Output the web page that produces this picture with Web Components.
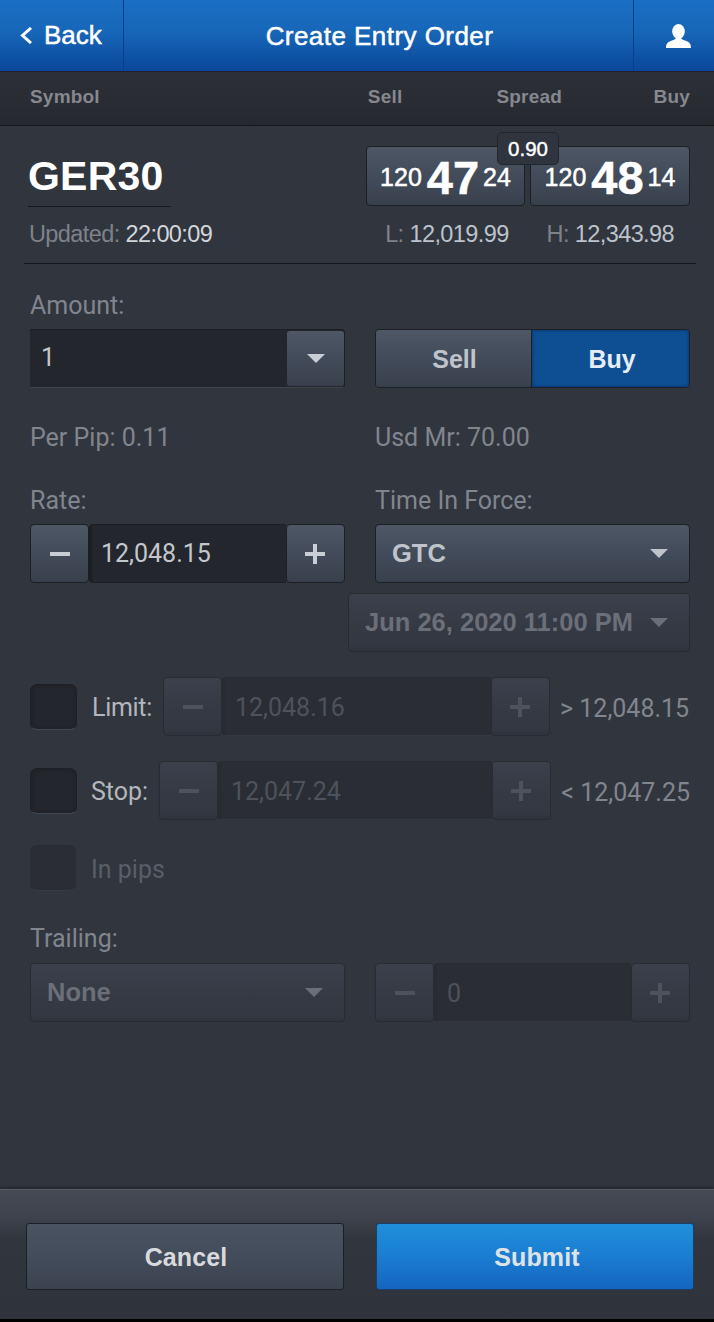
<!DOCTYPE html>
<html>
<head>
<meta charset="utf-8">
<title>Create Entry Order</title>
<style>
html,body{margin:0;padding:0;background:#000}
body{width:714px;height:1322px;overflow:hidden;font-family:"Roboto",sans-serif}
</style>
</head>
<body>
<order-screen>
  <app-bar slot="top">Create Entry Order</app-bar>
  <column-bar slot="top"></column-bar>
  <quote-panel slot="top"></quote-panel>

  <form-row cols style="--gap:28px"><field-label>Amount:</field-label></form-row>
  <form-row cols style="--gap:11px">
    <combo-box>1</combo-box>
    <side-toggle></side-toggle>
  </form-row>
  <form-row cols style="--gap:36px">
    <field-label>Per Pip: 0.11</field-label>
    <field-label>Usd Mr: 70.00</field-label>
  </form-row>
  <form-row cols style="--gap:37px">
    <field-label>Rate:</field-label>
    <field-label>Time In Force:</field-label>
  </form-row>
  <form-row cols style="--gap:11px">
    <num-stepper>12,048.15</num-stepper>
    <drop-select>GTC</drop-select>
  </form-row>
  <form-row cols style="--gap:10px">
    <span></span>
    <drop-select dim style="margin-left:-27px">Jun 26, 2020 11:00 PM</drop-select>
  </form-row>
  <form-row style="--gap:25px">
    <check-box></check-box>
    <field-label bright style="margin:3px -4px 0 15px;width:60px;letter-spacing:-.3px">Limit:</field-label>
    <num-stepper dim style="flex:1;margin-left:15px">12,048.16</num-stepper>
    <field-label style="margin:4px 1px 0 10px;width:129px;text-align:right;white-space:nowrap">&gt; 12,048.15</field-label>
  </form-row>
  <form-row style="--gap:25px">
    <check-box></check-box>
    <field-label bright style="margin:3px -4px 0 14px;width:57px">Stop:</field-label>
    <num-stepper dim style="flex:1;margin-left:15px">12,047.24</num-stepper>
    <field-label style="margin:4px 0 0 10px;width:129px;text-align:right;white-space:nowrap">&lt; 12,047.25</field-label>
  </form-row>
  <form-row style="--gap:25px">
    <check-box dim></check-box>
    <field-label faint style="margin:3px 0 0 15px">In pips</field-label>
  </form-row>
  <form-row cols style="--gap:34px"><field-label>Trailing:</field-label></form-row>
  <form-row cols style="--gap:12px">
    <drop-select dim>None</drop-select>
    <num-stepper dim>0</num-stepper>
  </form-row>

  <action-bar slot="bottom">
    <action-button>Cancel</action-button>
    <action-button primary>Submit</action-button>
  </action-bar>
</order-screen>

<script>
// small helper, every element is just a style + markup in an open shadow root
const define = (name, css, html) => customElements.define(name, class extends HTMLElement {
    constructor() {
        super().attachShadow({ mode: "open" }).innerHTML = `<style>${css}</style>${html}`
    }
})

const KEY = `background:linear-gradient(#4e5766,#434c5a 45%,#3c4452 85%,#383f4c);border:1px solid #1c1f25;border-radius:4px;box-sizing:border-box;`
const KEY_DIM = `background:linear-gradient(#3b404c,#343944 60%,#333843 88%,#2f333c);border:1px solid #282b32;border-radius:4px;box-sizing:border-box;`
const ARROW = `<svg width="18" height="9" viewBox="0 0 18 9"><path d="M0 0H18L9 9Z" fill="currentColor"/></svg>`
const MINUS = `<svg width="20" height="4" viewBox="0 0 20 4"><rect width="20" height="4" fill="currentColor"/></svg>`
const PLUS = `<svg width="20" height="20" viewBox="0 0 20 20"><path d="M8 0h4v8h8v4h-8v8H8v-8H0V8h8z" fill="currentColor"/></svg>`

define("order-screen", `
    :host{display:flex;flex-direction:column;width:714px;height:1322px;background:#31353e;color:#878b93}
    main{flex:1;padding:0 24px 0 30px;display:block}
    footer{border-bottom:3px solid #000}`,
    `<slot name="top"></slot><main><slot></slot></main><footer><slot name="bottom"></slot></footer>`)

define("app-bar", `
    :host{display:flex;height:72px;box-sizing:border-box;border-bottom:1px solid #1f2329;
        background:linear-gradient(#1a6fc4,#1766b8 45%,#0d4fa2 85%,#0b479a);color:#fff;
        font:400 26px "Liberation Sans",sans-serif;-webkit-text-stroke:.5px #fff}
    .cell{display:flex;align-items:center;box-sizing:border-box}
    .back{width:124px;border-right:1px solid #0a3f88;padding-left:20px;gap:12px}
    .title{flex:1;justify-content:center;letter-spacing:.45px;padding:1px 0 0 2px}
    .user{width:81px;border-left:1px solid #0a3f88;padding:1px 0 0 32px}`,
    `<div class="cell back">
        <svg width="12" height="17" viewBox="0 0 12 17"><path d="M11 1L2.500 8.500 11 16" fill="none" stroke="#fff" stroke-width="3"/></svg>
        <span>Back</span>
    </div>
    <div class="cell title"><slot></slot></div>
    <div class="cell user">
        <svg width="25" height="24" viewBox="0 0 25 24"><ellipse cx="12.500" cy="7.500" rx="6.300" ry="7.500" fill="#fff"/><path d="M0 24c0-5 2.500-6.500 6-7.500 2-.6 3.500-1.200 4-2.500h5c.5 1.300 2 1.900 4 2.500 3.500 1 6 2.500 6 7.500z" fill="#fff"/></svg>
    </div>`)

define("column-bar", `
    :host{display:block;height:54px;box-sizing:border-box;border-bottom:1px solid #16181c;
        background:linear-gradient(#2c2f36,#292c33 60%,#26282e);color:#85888e;
        font:700 19px "Liberation Sans",sans-serif;letter-spacing:.2px;position:relative}
    div{display:flex;padding:13px 24px 0 30px;line-height:24px}
    .sell{margin-left:268px}.spread{margin-left:94px}.buy{margin-left:auto}`,
    `<div><span>Symbol</span><span class="sell">Sell</span><span class="spread">Spread</span><span class="buy">Buy</span></div>`)

define("price-tile", `
    :host{display:flex;align-items:center;justify-content:center;height:60px;${KEY}color:#fff;
        font:400 25px "Liberation Sans",sans-serif;-webkit-text-stroke:.5px #fff;gap:5px;width:159px;padding-top:2px}
    b{font:700 47px/1 "Liberation Sans",sans-serif}
    span:last-child{margin-left:-1px}`,
    `<span><slot name="a"></slot></span><b><slot name="b"></slot></b><span><slot name="c"></slot></span>`)

define("quote-panel", `
    :host{display:block;margin:0 18px 0 24px;padding:20px 6px 16px 0;border-bottom:1px solid #15171b;
        font:400 23.500px/26px "Liberation Sans",sans-serif;letter-spacing:-.6px;color:#7d828a}
    .top{display:flex;justify-content:space-between}
    .sym{margin-left:4px;width:143px;height:61px;box-sizing:border-box;border-bottom:1px solid #17191d;letter-spacing:.2px;
        color:#fff;font:700 41px/61px "Liberation Sans",sans-serif}
    .prices{display:flex;gap:5px;position:relative;letter-spacing:0}
    .badge{position:absolute;left:131px;top:-14px;width:62px;height:33px;box-sizing:border-box;border-radius:5px;
        background:#30343f;border:1px solid #23262d;color:#fff;font:400 20.500px/31px "Liberation Sans",sans-serif;
        -webkit-text-stroke:.4px #fff;text-align:center}
    .info{display:flex;margin-top:14px;padding-left:5px}
    em{font-style:normal;color:#d2d6db}
    .lo{margin-left:auto}.hi{margin-left:38px;margin-right:16px}
    .lo em,.hi em{color:#bcc3cc}`,
    `<div class="top">
        <div class="sym">GER30</div>
        <div class="prices">
            <price-tile><span slot="a">120</span><span slot="b">47</span><span slot="c">24</span></price-tile>
            <price-tile style="width:160px"><span slot="a">120</span><span slot="b">48</span><span slot="c">14</span></price-tile>
            <div class="badge">0.90</div>
        </div>
    </div>
    <div class="info">
        <span>Updated: <em>22:00:09</em></span>
        <span class="lo">L: <em>12,019.99</em></span>
        <span class="hi">H: <em>12,343.98</em></span>
    </div>`)

define("form-row", `
    :host{display:flex;align-items:center;margin-top:var(--gap,0)}
    :host([cols]){display:grid;grid-template-columns:315px 315px;gap:30px}`,
    `<slot></slot>`)

define("field-label", `
    :host{display:block;font:400 25px/28px "Roboto",sans-serif;margin-bottom:-2px;color:#81858d}
    :host([bright]){color:#b3b7bd}
    :host([faint]){color:#5a5e68}`,
    `<slot></slot>`)

define("combo-box", `
    :host{display:flex;height:59px;box-sizing:border-box;background:#23262c;border-top:1px solid #1c1e23;border-bottom:1px solid #40444c;border-right:1px solid #1c1e23;border-radius:0 4px 4px 0;
        font:400 25px "Roboto",sans-serif;color:#c3c7cd}
    .val{flex:1;padding-left:11px;line-height:56px}
    .key{width:57px;margin:1px 0;${KEY}border:0;border-radius:3px;display:flex;align-items:center;justify-content:center;color:#c9ced6}`,
    `<div class="val"><slot></slot></div><div class="key">${ARROW}</div>`)

define("side-toggle", `
    :host{display:flex;height:59px;box-sizing:border-box;border:1px solid #1c1f25;border-radius:4px;overflow:hidden;
        font:700 25px/59px "Liberation Sans",sans-serif;text-align:center}
    .sell{width:156px;box-sizing:border-box;padding-left:2px;background:linear-gradient(#4e5766,#434c5a 45%,#3c4452 85%,#383f4c);color:#bfc4cc;border-right:1px solid #1c1f25}
    .buy{flex:1;padding-left:3px;background:#0e4f94;color:#e6edf6;box-shadow:inset 0 0 3px 1px #0a3a78}`,
    `<div class="sell">Sell</div><div class="buy">Buy</div>`)

define("num-stepper", `
    :host{display:flex;height:59px;box-sizing:border-box;font:400 25px "Roboto",sans-serif;color:#c3c7cd}
    .key{width:59px;flex:none;${KEY}display:flex;align-items:center;justify-content:center;color:#c9ced6}
    .key:last-child{padding-right:1px}
    .val{flex:1;min-width:0;background:#23262c;border:1px solid #1c1e23;border-left-width:3px;border-right:0;padding-left:9px;line-height:57px;box-sizing:border-box;border-radius:4px 0 0 4px}
    :host([dim]){color:#4e525c}
    :host([dim]) .key{${KEY_DIM}color:#4e525c}
    :host([dim]) .val{background:#2a2d33;border-color:#282b31;border-bottom-color:#343842;padding-left:10px;line-height:59px}`,
    `<div class="key">${MINUS}</div><div class="val"><slot></slot></div><div class="key">${PLUS}</div>`)

define("drop-select", `
    :host{display:flex;align-items:center;justify-content:space-between;height:59px;padding:0 21px 0 16px;${KEY}
        font:700 25.500px "Liberation Sans",sans-serif;color:#bfc4cc}
    :host([dim]){${KEY_DIM}color:#6b6f79}
    svg{flex:none}`,
    `<span><slot></slot></span>${ARROW}`)

define("check-box", `
    :host{display:block;width:47px;height:46px;box-sizing:border-box;margin:6px 0;flex:none;background:#23262c;
        border:1px solid #1e2025;border-bottom-color:#434750;border-radius:7px;box-shadow:inset 0 0 0 3px #212328}
    :host([dim]){width:46px;margin:0;background:#2a2d34;border-color:#292c32;border-bottom-color:#373a43;box-shadow:none}`,
    ``)

define("action-bar", `
    :host{display:flex;justify-content:space-between;height:130px;box-sizing:border-box;padding:33px 20px 0 26px;
        border-top:1px solid #5a5e67;box-shadow:0 -2px 2px #25282e;
        background:linear-gradient(#464a54,#3f434d 20%,#31353e 38%,#2f333c)}`,
    `<slot></slot>`)

define("action-button", `
    :host{display:block;width:318px;height:67px;box-sizing:border-box;padding-left:2px;border:1px solid #1c1f25;border-radius:3px;
        background:linear-gradient(#4a5362,#434c5a 50%,#3b4351);color:#d8dade;
        font:700 25px/67px "Liberation Sans",sans-serif;letter-spacing:.1px;text-align:center}
    :host([primary]){padding-left:4px;background:linear-gradient(#1f8fdb,#1b7fd2 45%,#1565c0);border-color:#1b3f6b;color:#dfe3e8}`,
    `<slot></slot>`)
</script>
</body>
</html>
